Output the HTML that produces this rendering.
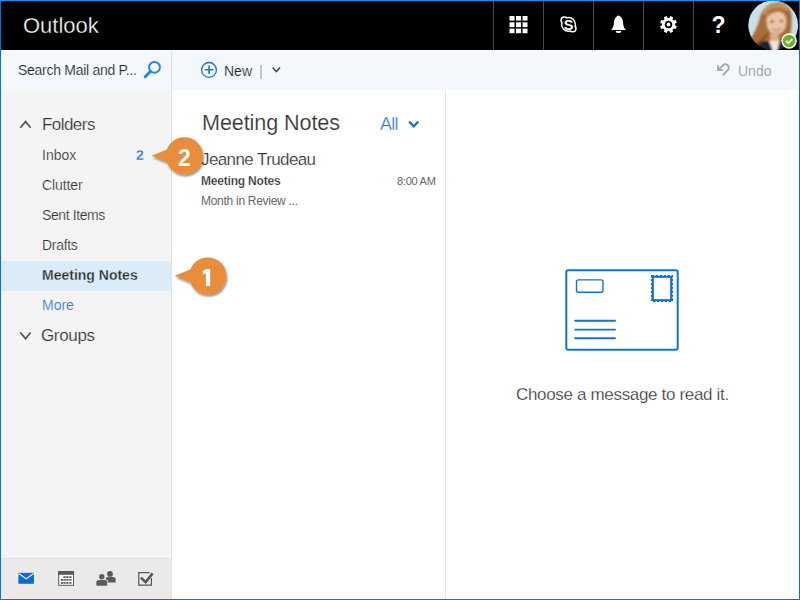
<!DOCTYPE html>
<html><head><meta charset="utf-8">
<style>
*{margin:0;padding:0;box-sizing:border-box}
html,body{width:800px;height:600px;overflow:hidden;background:#fff;font-family:"Liberation Sans",sans-serif}
#frame{position:absolute;left:0;top:0;width:800px;height:600px;border:1px solid #0a74d4;border-top-color:#1a90ea}
.abs{position:absolute}
.t{position:absolute;white-space:nowrap;line-height:1}
svg{position:absolute;overflow:visible}
#hdr{position:absolute;left:1px;top:1px;width:798px;height:49px;background:#000}
.hc{position:absolute;top:0;width:1px;height:49px;background:#4a4a4a}
#search{position:absolute;left:1px;top:50px;width:170px;height:40px;background:#f4f8fc}
#cmd{position:absolute;left:172px;top:50px;width:627px;height:40px;background:#f4f8fc}
#side{position:absolute;left:1px;top:90px;width:170px;height:509px;background:#f4f4f4}
#vb1{position:absolute;left:171px;top:50px;width:1px;height:549px;background:#e3e3e3}
#vb2{position:absolute;left:445px;top:90px;width:1px;height:509px;background:#e6e6e6}
#foot{position:absolute;left:1px;top:558px;width:170px;height:41px;background:#eaeaea;border-top:1px solid #e2e2e2}
</style></head><body>
<div id="hdr">
  <div class="t" style="left:22px;top:14px;font-size:22px;color:#fff;-webkit-text-stroke:0.35px #000">Outlook</div>
  <div class="hc" style="left:492px"></div>
  <div class="hc" style="left:542px"></div>
  <div class="hc" style="left:592px"></div>
  <div class="hc" style="left:642px"></div>
  <div class="hc" style="left:692px"></div>
</div>
<div id="search"></div>
<div id="cmd"></div>
<div id="side"></div>
<div id="vb1"></div>
<div id="vb2"></div>
<div id="foot"></div>

<!-- search -->
<div class="t" style="left:18px;top:63.2px;font-size:14px;color:#262626;letter-spacing:-0.28px;-webkit-text-stroke:0.15px #f4f8fc">Search Mail and P...</div>
<!-- cmd -->
<div class="t" style="left:224px;top:63.6px;font-size:14px;color:#262626;-webkit-text-stroke:0.15px #f4f8fc">New</div>
<div class="t" style="left:738px;top:64.4px;font-size:14px;color:#a6a6a6">Undo</div>

<!-- sidebar -->
<div class="abs" style="left:1px;top:261px;width:170px;height:30px;background:#dcebf8"></div>
<div class="t" style="left:42px;top:115.7px;font-size:17px;color:#333;letter-spacing:-0.55px;-webkit-text-stroke:0.2px #f4f4f4">Folders</div>
<div class="t" style="left:42px;top:148.2px;font-size:14px;color:#333;-webkit-text-stroke:0.2px #f4f4f4">Inbox</div>
<div class="t" style="left:136px;top:147.7px;font-size:14px;color:#1a73d1;font-weight:bold;-webkit-text-stroke:0.3px #f4f4f4">2</div>
<div class="t" style="left:42px;top:178.2px;font-size:14px;color:#333;letter-spacing:-0.1px;-webkit-text-stroke:0.2px #f4f4f4">Clutter</div>
<div class="t" style="left:42px;top:207.7px;font-size:14px;color:#333;letter-spacing:-0.4px;-webkit-text-stroke:0.2px #f4f4f4">Sent Items</div>
<div class="t" style="left:42px;top:238.2px;font-size:14px;color:#333;letter-spacing:-0.3px;-webkit-text-stroke:0.2px #f4f4f4">Drafts</div>
<div class="t" style="left:42px;top:268.2px;font-size:14px;color:#262626;font-weight:bold;-webkit-text-stroke:0.3px #dcebf8">Meeting Notes</div>
<div class="t" style="left:42px;top:298px;font-size:14px;color:#1f78d6;-webkit-text-stroke:0.2px #f4f4f4">More</div>
<div class="t" style="left:41px;top:326.7px;font-size:17px;color:#333;letter-spacing:-0.35px;-webkit-text-stroke:0.2px #f4f4f4">Groups</div>

<!-- list -->
<div class="t" style="left:202px;top:112px;font-size:21.6px;color:#333;letter-spacing:-0.1px;-webkit-text-stroke:0.2px #fff">Meeting Notes</div>
<div class="t" style="left:380px;top:115px;font-size:18px;color:#1a73d1;letter-spacing:-0.8px;-webkit-text-stroke:0.3px #fff">All</div>
<div class="t" style="left:201px;top:151px;font-size:17px;color:#333;letter-spacing:-0.6px;-webkit-text-stroke:0.2px #fff">Jeanne Trudeau</div>
<div class="t" style="left:201px;top:175px;font-size:12px;color:#262626;font-weight:bold;letter-spacing:-0.2px;-webkit-text-stroke:0.25px #fff">Meeting Notes</div>
<div class="t" style="left:397px;top:176px;font-size:11px;color:#666;letter-spacing:-0.25px">8:00 AM</div>
<div class="t" style="left:201px;top:195px;font-size:12px;color:#666;letter-spacing:-0.28px">Month in Review ...</div>

<!-- reading -->
<div class="t" style="left:516px;top:385.5px;font-size:17px;color:#333;letter-spacing:-0.33px;-webkit-text-stroke:0.25px #fff">Choose a message to read it.</div>


<svg width="800" height="600" viewBox="0 0 800 600" style="left:0;top:0">
<defs>
  <filter id="sh" x="-30%" y="-30%" width="160%" height="160%">
    <feGaussianBlur in="SourceAlpha" stdDeviation="1.2"/>
    <feOffset dx="1.2" dy="1.5" result="b"/>
    <feComponentTransfer><feFuncA type="linear" slope="0.45"/></feComponentTransfer>
    <feMerge><feMergeNode/><feMergeNode in="SourceGraphic"/></feMerge>
  </filter>
  <filter id="bl"><feGaussianBlur stdDeviation="1"/></filter>
  <clipPath id="av"><circle cx="773.2" cy="25.3" r="24.9"/></clipPath>
</defs>
<!-- header icons -->
<g fill="#fff">
  <rect x="509.5" y="16" width="5" height="4.6"/><rect x="516" y="16" width="5" height="4.6"/><rect x="522.5" y="16" width="5" height="4.6"/>
  <rect x="509.5" y="22.3" width="5" height="4.8"/><rect x="516" y="22.3" width="5" height="4.8"/><rect x="522.5" y="22.3" width="5" height="4.8"/>
  <rect x="509.5" y="28.6" width="5" height="4.6"/><rect x="516" y="28.6" width="5" height="4.6"/><rect x="522.5" y="28.6" width="5" height="4.6"/>
</g>
<g>
  <g fill="#fff"><circle cx="568.5" cy="24.4" r="7.6"/><circle cx="564.4" cy="20.3" r="4.1"/><circle cx="572.6" cy="28.5" r="4.1"/></g>
  <g fill="#000"><circle cx="568.5" cy="24.4" r="6.1"/><circle cx="564.4" cy="20.3" r="2.6"/><circle cx="572.6" cy="28.5" r="2.6"/></g>
  <text x="568.6" y="29.6" font-family="Liberation Sans" font-weight="bold" font-size="14.5" fill="#fff" text-anchor="middle">S</text>
</g>
<path fill="#fff" d="M618.5 15.4 C619.6 15.4 620.4 16.6 621.6 17.8 C622.6 18.8 622.9 21.5 623.3 24.5 C623.6 27 624.4 28.7 626.1 30.1 H610.9 C612.6 28.7 613.4 27 613.7 24.5 C614.1 21.5 614.4 18.8 615.4 17.8 C616.6 16.6 617.4 15.4 618.5 15.4Z M615.6 31.1 H621.4 L620.2 33.1 H616.8Z"/>
<path fill="#fff" fill-rule="evenodd" d="M669.37 17.96 L670.40 16.11 L673.09 17.23 L672.51 19.26 L673.74 20.49 L675.77 19.91 L676.89 22.60 L675.04 23.63 L675.04 25.37 L676.89 26.40 L675.77 29.09 L673.74 28.51 L672.51 29.74 L673.09 31.77 L670.40 32.89 L669.37 31.04 L667.63 31.04 L666.60 32.89 L663.91 31.77 L664.49 29.74 L663.26 28.51 L661.23 29.09 L660.11 26.40 L661.96 25.37 L661.96 23.63 L660.11 22.60 L661.23 19.91 L663.26 20.49 L664.49 19.26 L663.91 17.23 L666.60 16.11 L667.63 17.96Z M668.5 20.7 A3.8 3.8 0 1 0 668.51 20.7Z"/>
<circle cx="668.5" cy="24.5" r="1.9" fill="#fff"/>
<text x="718.5" y="33" font-family="Liberation Sans" font-weight="bold" font-size="23" fill="#fff" text-anchor="middle">?</text>
<!-- avatar -->
<g clip-path="url(#av)"><g filter="url(#bl)">
  <rect x="740" y="-5" width="66" height="60" fill="#cde1e4"/>
  <path d="M746 42 C752 38 756 30 759 20 C761 10 767 3 777 2 C786 1.5 791 7 792 16 C792.5 24 791 32 790 40 L786 52 L746 52Z" fill="#a86c38"/>
  <path d="M762 14 C765 6 772 3 779 3 C785 3 789 6 790 11 C784 8 776 8 768 15Z" fill="#c8925a"/>
  <path d="M766.5 21 C766.5 14 771 11.5 777 11.5 C783 11.5 786.5 15 786.2 22 C786 29 782 34.2 776.5 34.2 C770.5 34.2 766.5 29 766.5 21Z" fill="#ebc6a6"/>
  <path d="M765 20 C768 14 776 10 787 12 C785 8 778 6 772 8 C767 10 765 15 765 20Z" fill="#b07540"/>
  <path d="M770.5 32 H778.5 L779 43 H770Z" fill="#dcae8a"/>
  <path d="M744 52 C748 45 756 41 769 41 L773 52Z M777 52 L779.5 41 C786 41 792 44 797 52Z" fill="#1e2334"/>
  <path d="M769 41 L773.5 52 L777 52 L779.5 41Z" fill="#f0e6dc"/>
  <ellipse cx="772" cy="21.5" rx="1.8" ry="1" fill="#5a3a2a"/>
  <ellipse cx="781.5" cy="21" rx="1.8" ry="1" fill="#5a3a2a"/>
  <path d="M772.5 28.5 C775 30.5 779 30.5 781.5 28" fill="none" stroke="#b57a66" stroke-width="1.2"/>
  <path d="M768 34 C764 38 760 42 756 46" fill="none" stroke="#7a4a22" stroke-width="2"/>
</g></g>
<circle cx="789.1" cy="41" r="7.7" fill="#fff"/>
<circle cx="789.1" cy="41" r="6.2" fill="#68b22a"/>
<path d="M786 41 L788.4 43.2 L792.3 39.2" fill="none" stroke="#fff" stroke-width="1.7"/>

<!-- search icon -->
<circle cx="154.5" cy="67.3" r="5.4" fill="none" stroke="#2b86d6" stroke-width="2"/>
<path d="M150.3 71.6 L145.2 76.7" stroke="#2b86d6" stroke-width="3" stroke-linecap="round"/>
<!-- new -->
<circle cx="209" cy="69.9" r="7.4" fill="none" stroke="#1a73d1" stroke-width="1.3"/>
<path d="M204.8 69.8 H213.4 M209.1 65.4 V74" stroke="#1a73d1" stroke-width="1.6"/>
<path d="M261 65 V78.7" stroke="#a9a9a9" stroke-width="1.3"/>
<path d="M272.6 67.6 L276.3 71.6 L280 67.6" fill="none" stroke="#444" stroke-width="1.5"/>
<!-- undo -->
<path d="M722.6 75.4 L727.6 70.3 C730 67.8 728.6 64.2 725.4 64.2 C724.4 64.2 723.6 64.6 722.9 65.3 L718.6 69.6" fill="none" stroke="#a6a6a6" stroke-width="1.8"/>
<path d="M718 65.2 V70.2 H723" fill="none" stroke="#a6a6a6" stroke-width="1.8"/>
<!-- sidebar chevrons -->
<path d="M20.4 127.8 L25.5 121.6 L30.6 127.8" fill="none" stroke="#4a4a4a" stroke-width="1.6"/>
<path d="M20.4 332.6 L25.5 338.8 L30.6 332.6" fill="none" stroke="#4a4a4a" stroke-width="1.6"/>
<!-- all chevron -->
<path d="M409.2 121.6 L413.7 126.3 L418.2 121.6" fill="none" stroke="#1a73d1" stroke-width="2.3"/>

<!-- postcard -->
<g fill="none" stroke="#1272d2">
  <rect x="566.3" y="270.2" width="111.4" height="79.6" rx="2" stroke-width="2"/>
  <rect x="576.5" y="279.9" width="26.5" height="12.4" rx="2" stroke-width="1.4"/>
  <path d="M575.2 320.8 H615 M575.2 329.6 H615 M575.2 338.3 H615" stroke-width="1.9" stroke-linecap="round"/>
  <rect x="651.8" y="275.8" width="20.4" height="25.4" stroke-width="1.6" stroke-dasharray="2.6 1.3"/>
  <rect x="652.9" y="276.9" width="18.2" height="23.2" stroke-width="1.9"/>
</g>

<!-- footer icons -->
<rect x="18.4" y="572.8" width="15.6" height="11" fill="#0a6ed1"/>
<path d="M18.6 573.4 L26.2 578.8 L33.8 573.4" fill="none" stroke="#eaeaea" stroke-width="1.2"/>
<g>
  <rect x="58.7" y="571.5" width="14.8" height="13.8" fill="#fff" stroke="#5a5a5a" stroke-width="1"/>
  <rect x="58.2" y="571" width="15.8" height="3.8" fill="#5a5a5a"/>
  <g fill="#5a5a5a">
    <rect x="63.4" y="576.2" width="2.2" height="1.8"/><rect x="66.3" y="576.2" width="2.2" height="1.8"/><rect x="69.3" y="576.2" width="2.2" height="1.8"/>
    <rect x="60.8" y="579" width="2.2" height="1.8"/><rect x="63.4" y="579" width="2.2" height="1.8"/><rect x="66.3" y="579" width="2.2" height="1.8"/><rect x="69.3" y="579" width="2.2" height="1.8"/>
    <rect x="60.8" y="582" width="2.2" height="1.8"/><rect x="63.4" y="582" width="2.2" height="1.8"/><rect x="66.3" y="582" width="2.2" height="1.8"/><rect x="69.3" y="582" width="2.2" height="1.8"/>
  </g>
</g>
<g fill="#5c5c5c">
  <circle cx="110" cy="573.9" r="2.9"/>
  <path d="M105.6 582.6 V579.2 C105.6 577.8 106.6 577 108 577 H113.2 C114.6 577 115.6 577.8 115.6 579.2 V582.6Z"/>
  <circle cx="101.8" cy="576.8" r="3.4" fill="#eaeaea"/>
  <path d="M95.6 586.6 V582 C95.6 580.2 96.8 579.2 98.6 579.2 H105 C106.8 579.2 108 580.2 108 582 V586.6Z" fill="#eaeaea"/>
  <circle cx="101.8" cy="576.8" r="2.7"/>
  <path d="M96.4 585.8 V582.2 C96.4 580.8 97.4 580 98.8 580 H104.8 C106.2 580 107.2 580.8 107.2 582.2 V585.8Z"/>
</g>
<g fill="none" stroke="#555">
  <path d="M149.6 572.6 H138.8 V585.2 H151.4 V578" stroke-width="1.2"/>
  <path d="M141 577.6 L145.6 582.2 L152.6 573.4" stroke-width="2.5"/>
</g>

<!-- callouts -->
<g filter="url(#sh)" fill="#e98c3a">
  <circle cx="184.4" cy="155.8" r="18.6"/>
  <path d="M151.6 155.8 L172 147.6 L172 164Z"/>
  <circle cx="207.8" cy="276" r="18.6"/>
  <path d="M174.6 275.8 L195 267.6 L195 284Z"/>
</g>
<text x="184.3" y="166" font-family="Liberation Sans" font-weight="bold" font-size="23" fill="#fff" text-anchor="middle">2</text>
<path fill="#fff" d="M205.9 269 H210.2 V286 H205.9 V273.3 L202.7 274.5 V271.1 Z"/>
</svg>
<div id="frame"></div>
</body></html>
